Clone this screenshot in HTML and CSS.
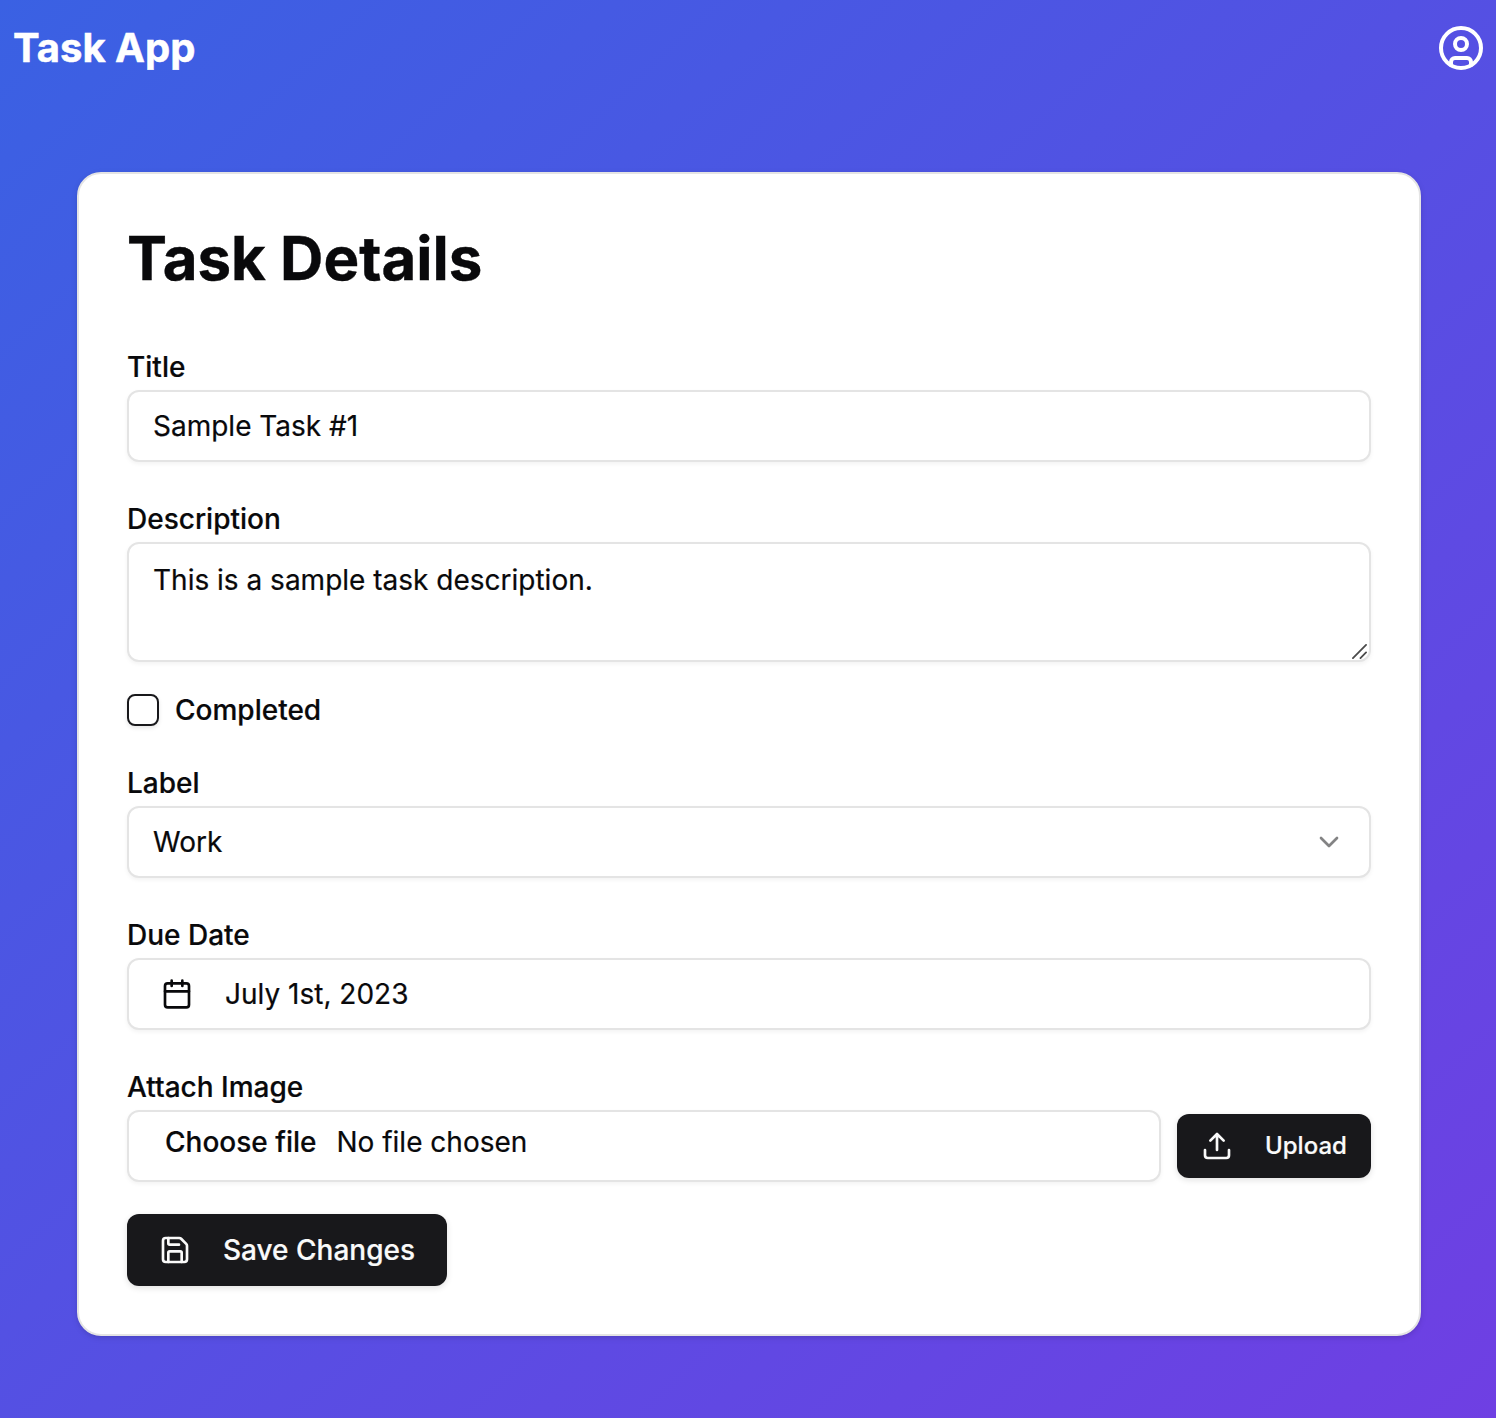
FILE: index.html
```html
<!DOCTYPE html>
<html lang="en">
<head>
<meta charset="utf-8">
<title>Task App</title>
<link rel="stylesheet" href="styles.css">
</head>
<body>
<header class="topbar">
  <div class="brand">Task App</div>
  <svg class="avatar" viewBox="0 0 24 24"><circle cx="12" cy="12" r="10"/><circle cx="12" cy="10" r="3"/><path d="M7 20.662V19a2 2 0 0 1 2-2h6a2 2 0 0 1 2 2v1.662"/></svg>
</header>
<main class="card">
  <h1 class="heading">Task Details</h1>
  <form class="form">
    <div class="field">
      <label class="label" for="title">Title</label>
      <input class="control" id="title" type="text" value="Sample Task #1">
    </div>
    <div class="field">
      <label class="label" for="description">Description</label>
      <div class="area-wrap">
        <textarea class="control area" id="description">This is a sample task description.</textarea>
        <svg class="grip" viewBox="0 0 16 16"><path d="M1 15 15 1M9 15l6-6"/></svg>
      </div>
    </div>
    <div class="check-row">
      <input class="checkbox" id="completed" type="checkbox">
      <label class="check-label" for="completed">Completed</label>
    </div>
    <div class="field">
      <div class="label">Label</div>
      <div class="control select">
        <span>Work</span>
        <svg class="icon chevron" viewBox="0 0 24 24"><path d="m6 9 6 6 6-6"/></svg>
      </div>
    </div>
    <div class="field">
      <div class="label">Due Date</div>
      <div class="control date">
        <svg class="icon" viewBox="0 0 24 24"><path d="M8 2v4M16 2v4M3 10h18"/><rect x="3" y="4" width="18" height="18" rx="2"/></svg>
        <span>July 1st, 2023</span>
      </div>
    </div>
    <div class="field">
      <div class="label">Attach Image</div>
      <div class="upload-row">
        <div class="control file"><span class="choose">Choose file</span><span>No file chosen</span></div>
        <button class="button upload" type="button">
          <svg class="icon" viewBox="0 0 24 24"><path d="M21 15v4a2 2 0 0 1-2 2H5a2 2 0 0 1-2-2v-4M17 8l-5-5-5 5M12 3v12"/></svg>
          <span>Upload</span>
        </button>
      </div>
    </div>
    <button class="button save" type="button">
      <svg class="icon" viewBox="0 0 24 24"><path d="M15.2 3a2 2 0 0 1 1.4.6l3.8 3.8a2 2 0 0 1 .6 1.4V19a2 2 0 0 1-2 2H5a2 2 0 0 1-2-2V5a2 2 0 0 1 2-2z"/><path d="M17 21v-7a1 1 0 0 0-1-1H8a1 1 0 0 0-1 1v7M7 3v4a1 1 0 0 0 1 1h7"/></svg>
      <span>Save Changes</span>
    </button>
  </form>
</main>
</body>
</html>
```
FILE: styles.css
```css
* { box-sizing: border-box; }
body {
  margin: 0;
  min-height: 1418px;
  background: linear-gradient(to bottom right, #3a61e3, #6f3fe3);
  color: #09090b;
  font: 400 28px/40px Inter, "Liberation Sans", sans-serif;
}
svg { fill: none; stroke: currentColor; stroke-width: 2; stroke-linecap: round; stroke-linejoin: round; flex: none; }
.topbar {
  display: flex;
  align-items: center;
  justify-content: space-between;
  height: 96px;
  padding: 0 11px 0 13px;
  color: #fff;
}
.brand { font-size: 40px; font-weight: 700; -webkit-text-stroke: .5px currentColor; }
.avatar { width: 48px; height: 48px; }
.card {
  width: 1344px;
  margin: 76px 0 0 77px;
  padding: 48px;
  border: 2px solid #e4e4e4;
  border-radius: 24px;
  background: #fff;
  box-shadow: 0 2px 6px rgba(0, 0, 0, .1), 0 2px 4px -2px rgba(0, 0, 0, .1);
}
.heading { margin: 0 0 48px; font-size: 60px; line-height: 72px; font-weight: 700; -webkit-text-stroke: .4px currentColor; }
.form { display: flex; flex-direction: column; gap: 32px; -webkit-text-stroke: .2px currentColor; }
.label { display: block; height: 48px; padding-top: 2px; line-height: 46px; font-weight: 500; }
.control {
  display: flex;
  align-items: center;
  width: 100%;
  height: 72px;
  padding: 0 24px;
  border: 2px solid #e4e4e4;
  border-radius: 12px;
  background: #fff;
  color: inherit;
  font: inherit;
  box-shadow: 0 2px 4px rgba(0, 0, 0, .05);
}
.area-wrap { position: relative; height: 120px; }
.area { display: block; height: 120px; padding: 16px 24px; resize: none; }
.grip { position: absolute; right: 4px; bottom: 3px; width: 15px; height: 15px; color: #4a4a4a; stroke-width: 1.9; }
.check-row { display: flex; align-items: center; gap: 16px; height: 32px; }
.checkbox {
  appearance: none;
  width: 32px;
  height: 32px;
  margin: 0;
  border: 2px solid #18181b;
  border-radius: 8px;
  box-shadow: 0 2px 4px rgba(0, 0, 0, .1);
}
.check-label { font-weight: 500; line-height: 32px; }
.icon { width: 32px; height: 32px; }
.select { justify-content: space-between; }
.chevron { opacity: .5; }
.date { gap: 32px; padding: 0 32px; }
.upload-row { display: flex; align-items: center; gap: 16px; }
.file { flex: 1; align-items: flex-start; gap: 20px; padding: 10px 36px; }
.choose { font-weight: 500; }
.button {
  display: flex;
  align-items: center;
  gap: 32px;
  border: 0;
  border-radius: 12px;
  background: #18181b;
  color: #fafafa;
  font: inherit;
  font-weight: 500;
  white-space: nowrap;
  box-shadow: 0 2px 6px rgba(0, 0, 0, .12);
}
.upload { width: 194px; height: 64px; padding: 0 24px; font-size: 24px; }
.save { width: 320px; height: 72px; padding: 0 32px; }
```
